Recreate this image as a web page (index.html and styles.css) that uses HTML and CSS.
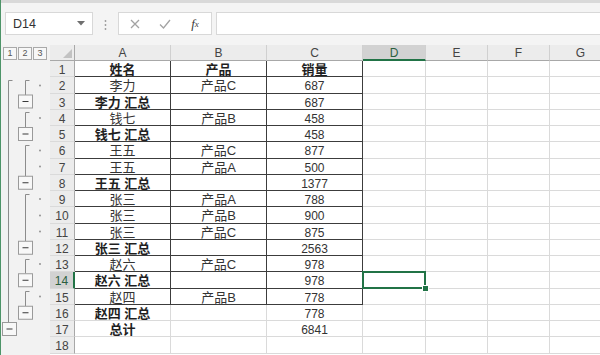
FILE: index.html
```html
<!DOCTYPE html>
<html lang="zh-CN">
<head>
    <meta charset="UTF-8">
    <meta name="viewport" content="width=device-width, initial-scale=1.0">
    <title>分类汇总</title>
    <link rel="stylesheet" href="styles.css">
</head>
<body>
<div class="app">
    <div class="ribbon-edge"></div>

    <div class="formula-bar">
        <div class="name-box">
            <span class="name-text">D14</span>
            <svg class="name-arrow" width="8" height="5" viewBox="0 0 8 5"><path d="M0 0H8L4 4.5Z"/></svg>
        </div>
        <div class="bar-grip">
            <svg width="3" height="12" viewBox="0 0 3 12"><circle cx="1.5" cy="2" r="0.9"/><circle cx="1.5" cy="6" r="0.9"/><circle cx="1.5" cy="10" r="0.9"/></svg>
        </div>
        <div class="fx-box">
            <span class="fx-btn">
                <svg width="10" height="10" viewBox="0 0 10 10"><path d="M1 1L9 9M9 1L1 9"/></svg>
            </span>
            <span class="fx-btn">
                <svg width="12" height="10" viewBox="0 0 12 10"><path d="M1 5.5L4.5 9L11 1"/></svg>
            </span>
            <span class="fx-btn fx-label">f<sub>x</sub></span>
        </div>
        <div class="formula-input"></div>
    </div>

    <div class="sheet">
        <div class="outline">
            <div class="levels"><span>1</span><span>2</span><span>3</span></div>
            <svg class="outline-tree" width="49" height="293" viewBox="0 0 49 293">
                <g class="bracket">
                    <path d="M11.5 19.5H7.5V261.5"/>
                    <path d="M28.5 19.5H24.5V34"/>
                    <path d="M28.5 51.5H24.5V66.5"/>
                    <path d="M28.5 84.5H24.5V115"/>
                    <path d="M28.5 133.5H24.5V180"/>
                    <path d="M28.5 198.5H24.5V212.5"/>
                    <path d="M28.5 230.5H24.5V245"/>
                </g>
                <g class="collapse">
                    <rect x="17.5" y="34" width="14" height="13"/>
                    <rect x="17.5" y="66.5" width="14" height="13"/>
                    <rect x="17.5" y="115.25" width="14" height="13"/>
                    <rect x="17.5" y="180.25" width="14" height="13"/>
                    <rect x="17.5" y="212.75" width="14" height="13"/>
                    <rect x="17.5" y="245.25" width="14" height="13"/>
                    <rect x="1.5" y="261.5" width="14" height="13"/>
                </g>
                <g class="minus">
                    <path d="M21.5 40.5H27.5M21.5 73H27.5M21.5 121.75H27.5M21.5 186.75H27.5M21.5 219.25H27.5M21.5 251.75H27.5M5.5 268H11.5"/>
                </g>
                <g class="dots">
                    <circle cx="39" cy="24.5" r="0.9"/>
                    <circle cx="39" cy="57" r="0.9"/>
                    <circle cx="39" cy="89.5" r="0.9"/>
                    <circle cx="39" cy="105.5" r="0.9"/>
                    <circle cx="39" cy="138" r="0.9"/>
                    <circle cx="39" cy="154.5" r="0.9"/>
                    <circle cx="39" cy="170.5" r="0.9"/>
                    <circle cx="39" cy="203" r="0.9"/>
                    <circle cx="39" cy="235.5" r="0.9"/>
                </g>
            </svg>
        </div>
        <div class="grid" id="grid"></div>
    </div>
</div>

<script>
// 姓名, 产品, 销量, kind ('head' = whole row bold, 'sum' = name bold)
let data = [
    ['姓名', '产品', '销量', 'head'],
    ['李力', '产品C', '687'],
    ['李力 汇总', '', '687', 'sum'],
    ['钱七', '产品B', '458'],
    ['钱七 汇总', '', '458', 'sum'],
    ['王五', '产品C', '877'],
    ['王五', '产品A', '500'],
    ['王五 汇总', '', '1377', 'sum'],
    ['张三', '产品A', '788'],
    ['张三', '产品B', '900'],
    ['张三', '产品C', '875'],
    ['张三 汇总', '', '2563', 'sum'],
    ['赵六', '产品C', '978'],
    ['赵六 汇总', '', '978', 'sum'],
    ['赵四', '产品B', '778'],
    ['赵四 汇总', '', '778', 'sum'],
    ['总计', '', '6841', 'sum'],
    ['', '', '']
];
let columns = ['A', 'B', 'C', 'D', 'E', 'F', 'G'];
let activeCol = 'D';
let activeRow = 14;
let boxedRows = 15;

function cell(cls, text){
    let div = document.createElement('div');
    div.className = cls;
    div.textContent = text || '';
    return div;
}

function buildGrid(){
    let grid = document.getElementById('grid');
    grid.appendChild(cell('corner'));
    columns.forEach(function(col){
        grid.appendChild(cell('col-head' + (col === activeCol ? ' active' : ''), col));
    });

    data.forEach(function(row, i){
        let rowNum = i + 1;
        grid.appendChild(cell('row-head' + (rowNum === activeRow ? ' active' : ''), rowNum));
        columns.forEach(function(col, c){
            let cls = 'cell';
            if(rowNum <= boxedRows && c < 3) cls += ' boxed';
            if(row[3] === 'head' && c < 3) cls += ' bold';
            if(row[3] === 'sum' && c === 0) cls += ' bold';
            if(c === 2 && row[3] !== 'head') cls += ' num';
            if(col === activeCol && rowNum === activeRow) cls += ' selected';
            grid.appendChild(cell(cls, c < 3 ? row[c] : ''));
        });
    });
}

buildGrid();
</script>
</body>
</html>
```

FILE: styles.css
```css
body{
    margin: 0;
    width: 600px;
    height: 355px;
    overflow: hidden;
    background: #ffffff;
    font-family: "Liberation Sans", "Noto Sans CJK SC", sans-serif;
    color: #262626;
}

.app{
    display: flex;
    flex-direction: column;
    height: 355px;
    border-left: 1px solid #4d9468;
}

/* top of the window */
.ribbon-edge{
    height: 3px;
    background: #d9d9d9;
}

.formula-bar{
    display: flex;
    align-items: flex-start;
    height: 42px;
    padding-top: 9px;
    box-sizing: border-box;
    background: #f4f4f4;
}

.name-box{
    display: flex;
    align-items: center;
    justify-content: space-between;
    width: 88px;
    height: 23px;
    margin-left: 4px;
    padding: 0 7px 0 7px;
    box-sizing: border-box;
    background: #ffffff;
    border: 1px solid #d8d8d8;
    font-size: 12.5px;
    color: #333;
}

.name-arrow{
    fill: #6f6f6f;
}

.bar-grip{
    display: flex;
    justify-content: center;
    width: 25px;
    padding-top: 7px;
}

.bar-grip svg{
    fill: #9a9a9a;
}

.fx-box{
    display: flex;
    align-items: center;
    width: 94px;
    height: 23px;
    padding-left: 1px;
    box-sizing: border-box;
    background: #ffffff;
    border: 1px solid #d8d8d8;
}

.fx-btn{
    display: flex;
    justify-content: center;
    align-items: center;
    width: 30px;
}

.fx-btn svg{
    fill: none;
    stroke: #a3a3a3;
    stroke-width: 1.3;
}

.fx-label{
    font-family: "Liberation Serif", serif;
    font-style: italic;
    font-size: 13px;
    color: #3a3a3a;
}

.fx-label sub{
    font-size: 9px;
}

.formula-input{
    flex: 1;
    height: 23px;
    margin-left: 4px;
    box-sizing: border-box;
    background: #ffffff;
    border: 1px solid #d8d8d8;
    border-right: none;
}

/* sheet */
.sheet{
    display: flex;
    flex: 1;
    overflow: hidden;
}

.outline{
    width: 49px;
    flex-shrink: 0;
    background: #f2f2f2;
}

.levels{
    display: flex;
    height: 16px;
    padding: 2px 0 0 2px;
    box-sizing: border-box;
}

.levels span{
    width: 14px;
    height: 13px;
    margin-right: 1px;
    box-sizing: border-box;
    border: 1px solid #a9a9a9;
    background: #f7f7f7;
    font-size: 9px;
    line-height: 11px;
    text-align: center;
    color: #555;
}

.outline-tree{
    display: block;
}

.bracket path{
    fill: none;
    stroke: #8c8c8c;
    stroke-width: 1;
}

.collapse rect{
    fill: #f8f8f8;
    stroke: #9a9a9a;
    stroke-width: 1;
}

.minus path{
    stroke: #3a3a3a;
    stroke-width: 1.2;
}

.dots circle{
    fill: #8a8a8a;
}

.grid{
    display: grid;
    grid-template-columns: 25px 96px 96px 96px 63px 62px 62px 62px;
    grid-template-rows: 16px repeat(18, 16.25px);
}

.corner,
.col-head,
.row-head{
    background: #ececec;
    color: #444;
    font-size: 12px;
    box-sizing: border-box;
}

.corner{
    position: relative;
    border-right: 1px solid #a8a8a8;
    border-bottom: 1px solid #a8a8a8;
}

.corner::after{
    content: "";
    position: absolute;
    right: 2px;
    bottom: 2px;
    border-left: 9px solid transparent;
    border-bottom: 9px solid #c2c2c2;
}

.col-head{
    text-align: center;
    line-height: 16px;
    border-right: 1px solid #d0d0d0;
    border-bottom: 1px solid #a8a8a8;
}

.row-head{
    text-align: center;
    line-height: 16px;
    padding-top: 1px;
    border-right: 1px solid #a8a8a8;
    border-bottom: 1px solid #dadada;
}

.col-head.active{
    background: #d2d2d2;
    color: #2b5f3f;
    border-bottom: 2px solid #217346;
}

.row-head.active{
    background: #d2d2d2;
    color: #2b5f3f;
    border-right: 2px solid #217346;
}

.cell{
    box-sizing: border-box;
    border-right: 1px solid #dadada;
    border-bottom: 1px solid #dadada;
    font-size: 13px;
    line-height: 16px;
    padding-top: 1px;
    text-align: center;
    white-space: nowrap;
    overflow: hidden;
    color: #333;
}

.cell.num{
    font-size: 12px;
}

.cell.boxed{
    border-right-color: #3c3c3c;
    border-bottom-color: #3c3c3c;
}

.cell.bold{
    font-weight: bold;
    color: #1f1f1f;
}

.cell.selected{
    position: relative;
    overflow: visible;
}

.cell.selected::after{
    content: "";
    position: absolute;
    left: -1px;
    top: -1px;
    right: -1px;
    bottom: -1px;
    border: 2px solid #217346;
    z-index: 2;
}

.cell.selected::before{
    content: "";
    position: absolute;
    right: -4px;
    bottom: -4px;
    width: 5px;
    height: 5px;
    background: #217346;
    border: 1px solid #ffffff;
    z-index: 3;
}
```
